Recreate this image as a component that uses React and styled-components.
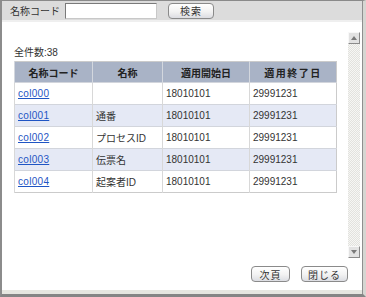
import React from "react";
import styled, { createGlobalStyle } from "styled-components";

const Global = createGlobalStyle`
  html, body { margin: 0; padding: 0; background: #fff; }
  body { font-family: "Liberation Sans", "Noto Sans CJK JP", sans-serif; font-size: 10px; color: #333; }
  * { box-sizing: border-box; }
`;

const Frame = styled.div`
  width: 366px;
  height: 297px;
  display: flex;
  flex-direction: column;
  border-top: 1px solid #8a8a8a;
  border-left: 2px solid #8c8c8c;
  border-right: 3px solid #d6d6d2;
  border-bottom: 3px solid #858585;
  position: relative;
  overflow: hidden;
`;

const RightLine = styled.div`
  position: absolute;
  top: 0;
  right: 0;
  bottom: 0;
  width: 1px;
  background: #8f8f8f;
`;

const Toolbar = styled.div`
  height: 21px;
  flex: none;
  display: flex;
  align-items: center;
  padding-left: 8px;
  background: #dcdcdc;
  border-bottom: 2px solid #efefef;
`;

const Label = styled.span`
  font-size: 10px;
  color: #333;
  margin-right: 5px;
`;

const TextInput = styled.input`
  width: 92px;
  height: 16px;
  border: 1px solid #7a7a7a;
  border-right-color: #c8c8c8;
  border-bottom-color: #c8c8c8;
  background: #fff;
  padding: 0 2px;
  font-size: 10px;
  margin: 0;
`;

const Button = styled.button`
  width: ${(p) => p.$w}px;
  height: 16px;
  margin: 0 0 0 ${(p) => p.$ml || 0}px;
  padding: 0;
  border: 1px solid #8a8a8a;
  border-radius: 4px;
  background: linear-gradient(#ffffff, #f2f2f2 55%, #dcdde2);
  font-family: "Liberation Sans", "Noto Sans CJK JP", sans-serif;
  font-size: 10px;
  color: #333;
  letter-spacing: 1px;
  display: flex;
  align-items: center;
  justify-content: center;
`;

const Body = styled.div`
  flex: 1;
  display: flex;
  flex-direction: column;
  background: #fff;
`;

const ScrollPane = styled.div`
  margin-top: 10px;
  height: 226px;
  display: flex;
  padding-right: 1px;
`;

const Content = styled.div`
  flex: 1;
  padding: 14px 0 0 12px;
`;

const Count = styled.div`
  height: 14px;
  line-height: 14px;
  font-size: 10px;
  margin-bottom: 1px;
`;

const Table = styled.table`
  border-collapse: collapse;
  width: 322px;
  table-layout: fixed;
  border: 1px solid #cbcbcb;
`;

const Th = styled.th`
  width: ${(p) => p.$w}px;
  height: 21px;
  background: #a9b3c6;
  color: #222;
  font-weight: bold;
  font-size: 10px;
  letter-spacing: ${(p) => p.$ls || 0}px;
  text-align: center;
  border-left: 1px solid #d3d7de;
  padding: 0;
`;

const Tr = styled.tr`
  background: ${(p) => (p.$alt ? "#e5e9f5" : "#fff")};
`;

const Td = styled.td`
  height: 22px;
  padding: 0 0 0 3px;
  font-size: 10px;
  color: #333;
  border-top: 1px solid #d2d5dc;
  border-left: 1px solid #d8d8d8;
  white-space: nowrap;
`;

const Link = styled.a`
  color: #1f55c4;
  text-decoration: underline;
  letter-spacing: 0.3px;
`;

const Scrollbar = styled.div`
  width: 12px;
  margin-right: 2px;
  display: flex;
  flex-direction: column;
`;

const ScrollBtn = styled.div`
  height: 12px;
  flex: none;
  background: #e2e2e2;
  border: 1px solid;
  border-color: #f8f8f8 #8a8a8a #8a8a8a #f8f8f8;
  display: flex;
  align-items: center;
  justify-content: center;
`;

const Track = styled.div`
  flex: 1;
  background-color: #f4f4f2;
  background-image: repeating-conic-gradient(#e2e2de 0 25%, #f6f6f4 0 50%);
  background-size: 2px 2px;
`;

const Footer = styled.div`
  display: flex;
  justify-content: flex-end;
  align-items: center;
  padding: 8px 15px 0 0;
`;

const BottomBand = styled.div`
  height: 4px;
  flex: none;
  background: #e6e6e0;
  margin-top: auto;
`;

const Arrow = ({ up }) => (
  <svg width="6" height="4" viewBox="0 0 6 4">
    <polygon points={up ? "3,0 6,4 0,4" : "0,0 6,0 3,4"} fill="#7a7a7a" />
  </svg>
);

const rows = [
  ["col000", "", "18010101", "29991231"],
  ["col001", "通番", "18010101", "29991231"],
  ["col002", "プロセスID", "18010101", "29991231"],
  ["col003", "伝票名", "18010101", "29991231"],
  ["col004", "起案者ID", "18010101", "29991231"],
];

export default function App() {
  return (
    <>
      <Global />
      <Frame>
        <RightLine />
        <Toolbar>
          <Label>名称コード</Label>
          <TextInput />
          <Button $w={46} $ml={11}>検索</Button>
        </Toolbar>
        <Body>
          <ScrollPane>
            <Content>
              <Count>全件数:38</Count>
              <Table>
                <thead>
                  <tr>
                    <Th $w={78}>名称コード</Th>
                    <Th $w={70}>名称</Th>
                    <Th $w={87}>適用開始日</Th>
                    <Th $w={87} $ls={1.5}>適用終了日</Th>
                  </tr>
                </thead>
                <tbody>
                  {rows.map((r, i) => (
                    <Tr key={r[0]} $alt={i % 2 === 1}>
                      <Td><Link href="#">{r[0]}</Link></Td>
                      <Td>{r[1]}</Td>
                      <Td>{r[2]}</Td>
                      <Td>{r[3]}</Td>
                    </Tr>
                  ))}
                </tbody>
              </Table>
            </Content>
            <Scrollbar>
              <ScrollBtn><Arrow up /></ScrollBtn>
              <Track />
              <ScrollBtn><Arrow /></ScrollBtn>
            </Scrollbar>
          </ScrollPane>
          <Footer>
            <Button $w={39}>次頁</Button>
            <Button $w={47} $ml={11}>閉じる</Button>
          </Footer>
          <BottomBand />
        </Body>
      </Frame>
    </>
  );
}
